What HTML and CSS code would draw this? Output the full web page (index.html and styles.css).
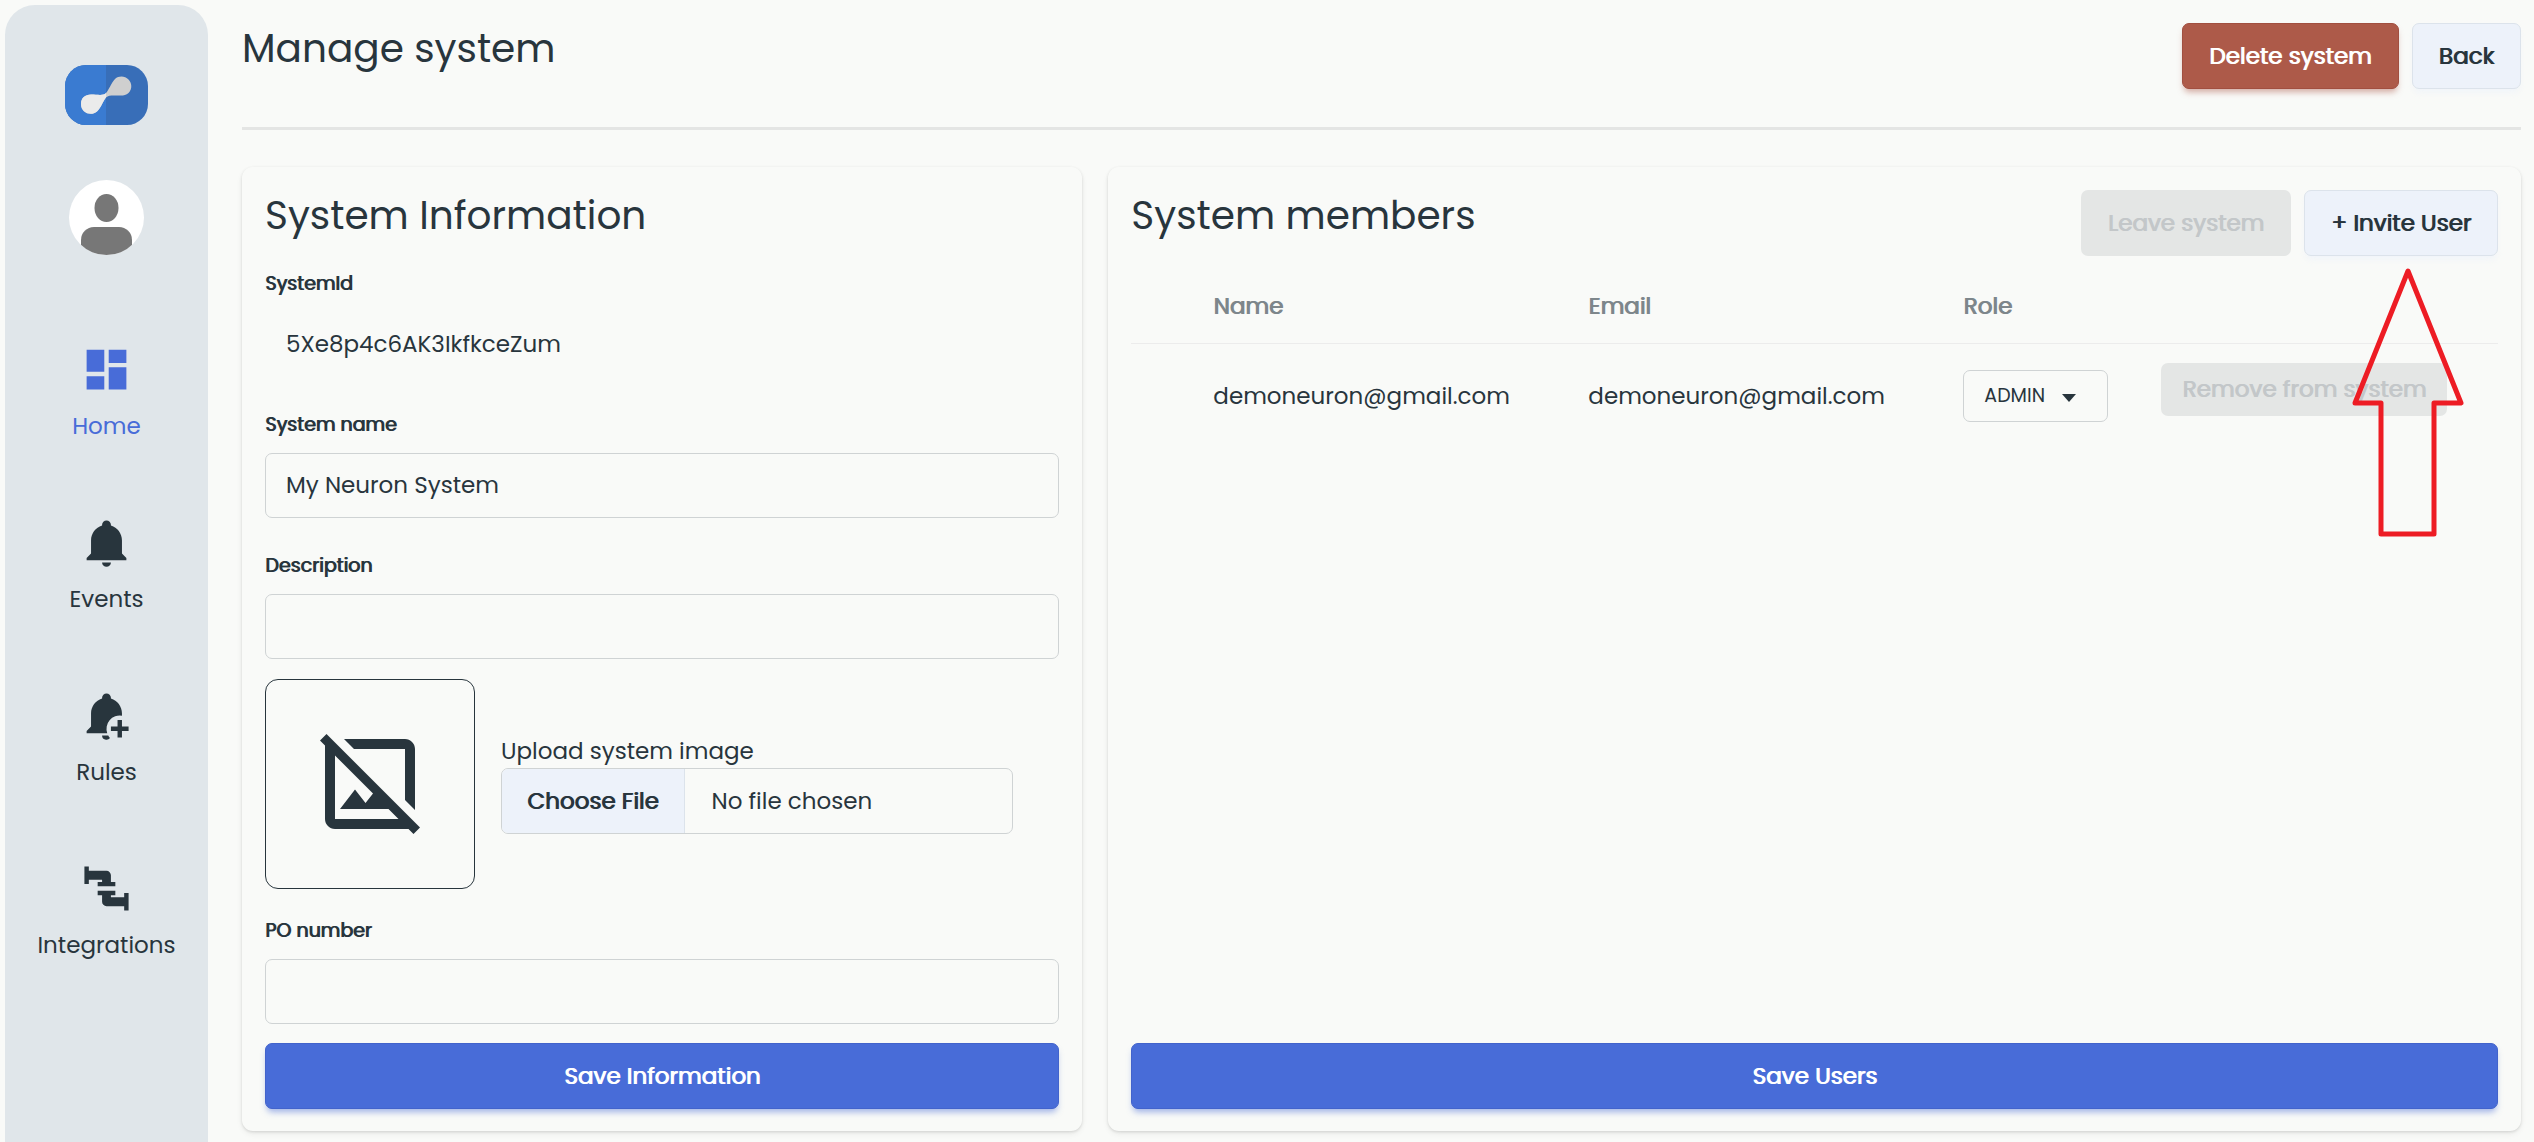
FILE: index.html
```html
<!DOCTYPE html>
<html lang="en">

<head>
  <meta charset="UTF-8">
  <meta name="viewport" content="width=device-width, initial-scale=1.0">
  <title>Manage system</title>

  <link rel="stylesheet" href="styles.css">
</head>

<body>
  <!-- Side navigation -->
  <aside class="sidebar">
    <a href="#" class="logo" aria-label="Neuron">
      <svg width="83" height="60" viewBox="0 0 83 60">
        <clipPath id="logo-shape"><rect width="83" height="60" rx="21" /></clipPath>
        <clipPath id="logo-left"><rect width="41" height="60" /></clipPath>
        <g clip-path="url(#logo-shape)">
          <rect width="83" height="60" fill="#386eb8" />
          <rect width="41" height="60" fill="#3a7bd1" />
        </g>
        <path fill="#cfcfcf" d="M16 39C16 33 20 29.500 26 29.500C33 29.500 38 31 41 28C44 25 46 18 50 14C54 10.500 60 11 63.500 14.500C67 18 67.500 24 63.500 28C60.500 31 57 30.500 53 30.500C48 30.500 43.500 30 41 32.500C38 36 36 43 32 46.500C26 51.500 16 48 16 39Z" />
        <path fill="#ebebeb" clip-path="url(#logo-left)" d="M16 39C16 33 20 29.500 26 29.500C33 29.500 38 31 41 28V32.500C38 36 36 43 32 46.500C26 51.500 16 48 16 39Z" />
      </svg>
    </a>
    <a href="#" class="avatar" aria-label="Account">
      <svg width="75" height="75" viewBox="0 0 75 75">
        <clipPath id="avatar-clip"><circle cx="37.500" cy="37.500" r="37.500" /></clipPath>
        <g clip-path="url(#avatar-clip)">
          <rect width="75" height="75" fill="#fff" />
          <ellipse cx="37.500" cy="28" rx="12" ry="14" fill="#777" />
          <rect x="12" y="47" width="51" height="40" rx="13" fill="#777" />
        </g>
      </svg>
    </a>
    <nav class="nav">
      <a href="#" class="nav-item active">
        <svg class="nav-icon" viewBox="0 0 24 24">
          <path d="M13,3V9H21V3M13,21H21V11H13M3,21H11V15H3M3,13H11V3H3V13Z" />
        </svg>
        Home
      </a>
      <a href="#" class="nav-item">
        <svg class="nav-icon" viewBox="0 0 24 24">
          <path d="M21,19V20H3V19L5,17V11C5,7.9 7.03,5.17 10,4.29C10,4.19 10,4.1 10,4A2,2 0 0,1 12,2A2,2 0 0,1 14,4C14,4.1 14,4.19 14,4.29C16.97,5.17 19,7.9 19,11V17L21,19M14,21A2,2 0 0,1 12,23A2,2 0 0,1 10,21" />
        </svg>
        Events
      </a>
      <a href="#" class="nav-item">
        <svg class="nav-icon" viewBox="0 0 24 24">
          <path d="M12.34,20H3V19L5,17V11C5,7.9 7.03,5.17 10,4.29V4A2,2 0 0,1 14,4V4.29C16.97,5.17 19,7.9 19,11V12.08A6,6 0 0,0 12.34,20M10,21H12.8C13,21.5 13.3,21.9 13.6,22.2A2,2 0 0,1 10,21M17,14H19V17H22V19H19V22H17V19H14V17H17V14Z" />
        </svg>
        Rules
      </a>
      <a href="#" class="nav-item">
        <svg class="nav-icon" viewBox="0 0 24 24">
          <path d="M16,9V11H8V9H10V8H4V10H2V2H4V4H12A2,2 0 0,1 14,6V9H16M10,15V18A2,2 0 0,0 12,20H20V22H22V14H20V16H14V15H16V13H8V15H10Z" />
        </svg>
        Integrations
      </a>
    </nav>
  </aside>

  <main class="content">
    <header class="page-header">
      <h1 class="title">Manage system</h1>
      <div class="actions">
        <button type="button" class="btn btn-danger">Delete system</button>
        <button type="button" class="btn btn-light">Back</button>
      </div>
    </header>

    <div class="columns">
      <!-- System information form -->
      <form class="card">
        <h2 class="title">System Information</h2>
        <div class="field first">
          <label for="system-id">SystemId</label>
          <input class="input plain" type="text" id="system-id" value="5Xe8p4c6AK3IkfkceZum" readonly>
        </div>
        <div class="field">
          <label for="system-name">System name</label>
          <input class="input" type="text" id="system-name" value="My Neuron System">
        </div>
        <div class="field">
          <label for="description">Description</label>
          <input class="input" type="text" id="description">
        </div>
        <div class="upload">
          <div class="preview">
            <svg width="120" height="120" viewBox="0 0 24 24">
              <path d="M22 20.7L3.3 2L2 3.3L3 4.3V19C3 20.1 3.9 21 5 21H19.7L20.7 22L22 20.7M5 19V6.3L12.6 13.9L11.1 15.8L9 13.1L6 17H15.7L17.7 19H5M8.8 5L6.8 3H19C20.1 3 21 3.9 21 5V17.2L19 15.2V5H8.8" />
            </svg>
          </div>
          <div class="upload-field">
            <label for="system-image">Upload system image</label>
            <input class="file-input" type="file" id="system-image">
          </div>
        </div>
        <div class="field">
          <label for="po-number">PO number</label>
          <input class="input" type="text" id="po-number">
        </div>
        <button type="submit" class="btn btn-primary">Save Information</button>
      </form>

      <!-- Members of the system -->
      <section class="card">
        <div class="card-header">
          <h2 class="title">System members</h2>
          <div class="actions">
            <button type="button" class="btn" disabled>Leave system</button>
            <button type="button" class="btn btn-light">+ Invite User</button>
          </div>
        </div>
        <table class="members">
          <colgroup>
            <col class="col-index">
            <col class="col-text">
            <col class="col-text">
            <col class="col-role">
            <col>
          </colgroup>
          <tr>
            <th></th>
            <th>Name</th>
            <th>Email</th>
            <th>Role</th>
            <th></th>
          </tr>
          <tr>
            <td></td>
            <td>demoneuron@gmail.com</td>
            <td>demoneuron@gmail.com</td>
            <td>
              <div class="select">
                <select aria-label="Role">
                  <option>ADMIN</option>
                  <option>USER</option>
                </select>
              </div>
            </td>
            <td><button type="button" class="btn btn-small" disabled>Remove from system</button></td>
          </tr>
        </table>
        <button type="button" class="btn btn-primary">Save Users</button>

        <!-- Points at the invite button -->
        <svg class="arrow" width="112" height="270" viewBox="0 0 112 270">
          <path d="M56 3L109 135H82V266H29V135H3Z" />
        </svg>
      </section>
    </div>
  </main>
</body>

</html>
```
FILE: styles.css
```css
* {
  box-sizing: border-box;
}

body {
  display: flex;
  min-height: 100vh;
  margin: 0;
  background-color: #f9faf8;
  color: #28353d;
  font-family: Poppins, Inter, "Open Sans", sans-serif;
  font-size: 23px;
  line-height: 30px;
}

input,
select,
button {
  font: inherit;
  color: inherit;
}

/* Side navigation */
.sidebar {
  flex: none;
  display: flex;
  flex-direction: column;
  align-items: center;
  width: 203px;
  margin: 5px 34px 0 5px;
  padding-top: 60px;
  border-radius: 30px 30px 0 0;
  background-color: #e0e6ea;
}

.logo,
.avatar {
  display: block;
  height: 60px;
}

.avatar {
  height: 75px;
  margin-top: 55px;
}

.nav {
  display: flex;
  flex-direction: column;
  gap: 75px;
  margin-top: 88px;
}

.nav-item {
  display: flex;
  flex-direction: column;
  align-items: center;
  gap: 15px;
  color: inherit;
  text-decoration: none;
}

.nav-item.active {
  color: #486cd8;
}

.nav-icon {
  width: 53px;
  height: 53px;
  fill: currentColor;
}

/* Page layout */
.content {
  flex: 1;
  display: flex;
  flex-direction: column;
  padding: 23px 13px 11px 0;
}

.page-header {
  display: flex;
  justify-content: space-between;
  padding-bottom: 38px;
  border-bottom: 3px solid #e4e5e4;
}

.title {
  margin: 0;
  font-size: 39px;
  font-weight: 400;
  line-height: 52px;
}

.actions {
  display: flex;
  gap: 13px;
}

.columns {
  flex: 1;
  display: grid;
  grid-template-columns: 373fr 627fr;
  gap: 26px;
  margin-top: 37px;
}

.card {
  position: relative;
  display: flex;
  flex-direction: column;
  padding: 23px 23px 22px;
  border-radius: 11px;
  box-shadow: 0 1px 3px rgba(0, 0, 0, 0.12), 0 3px 6px rgba(0, 0, 0, 0.06);
}

.card-header {
  display: flex;
  justify-content: space-between;
}

/* Buttons */
.btn {
  height: 66px;
  padding: 0 26px;
  border: 1px solid transparent;
  border-radius: 7px;
  text-shadow: 1px 0 currentColor;
  cursor: pointer;
}

.btn-primary {
  margin-top: auto;
  border-color: #4263cb;
  background-color: #486cd8;
  color: #fff;
  box-shadow: 0 5px 6px -2px rgba(72, 108, 216, 0.5);
}

.btn-danger {
  border-color: #a14f40;
  background-color: #ad5a49;
  color: #fff;
  box-shadow: 0 5px 6px -2px rgba(173, 90, 73, 0.5);
}

.btn-light {
  border-color: #dce3eb;
  background-color: #edf2fa;
  box-shadow: 0 5px 6px -2px rgba(237, 242, 250, 0.8);
}

.btn:disabled {
  background-color: #e4e6e5;
  color: #c3c7c9;
  cursor: default;
}

.btn-small {
  height: 53px;
  margin-bottom: 13px;
  padding: 0 20px;
}

/* Form */
.field {
  display: flex;
  flex-direction: column;
  gap: 14px;
  margin-top: 34px;
}

.field.first,
.upload + .field {
  margin-top: 28px;
}

.field label {
  font-size: 19px;
  line-height: 28px;
  text-shadow: 1px 0 currentColor;
}

.input {
  width: 100%;
  height: 65px;
  padding: 0 20px 2px;
  border: 1px solid #cfd3d4;
  border-radius: 7px;
  background-color: transparent;
}

.input.plain {
  border-color: transparent;
}

.upload {
  display: flex;
  align-items: center;
  gap: 26px;
  margin-top: 20px;
}

.preview {
  display: flex;
  align-items: center;
  justify-content: center;
  width: 210px;
  height: 210px;
  border: 1px solid #28353d;
  border-radius: 13px;
  fill: #28353d;
}

.upload-field {
  display: flex;
  flex-direction: column;
}

.upload-field label {
  line-height: 34px;
}

.file-input {
  width: 512px;
  height: 66px;
  border: 1px solid #cfd3d4;
  border-radius: 7px;
  line-height: 64px;
  overflow: hidden;
}

.file-input::file-selector-button {
  height: 64px;
  margin: 0 27px 0 0;
  padding: 0 25px;
  border: 0;
  border-right: 1px solid #dce3eb;
  background-color: #edf2fa;
  color: inherit;
  font: inherit;
  text-shadow: 1px 0 currentColor;
}

/* Members table */
.members {
  width: 100%;
  margin-top: 13px;
  border-collapse: collapse;
  table-layout: fixed;
  text-align: left;
}

.members th {
  padding: 22px;
  border-bottom: 1px solid #ececec;
  color: #7d868b;
  font-weight: 400;
  text-shadow: 1px 0 currentColor;
}

.members td {
  height: 104px;
  padding: 0 22px;
}

.col-index {
  width: 60px;
}

.col-text {
  width: 375px;
}

.col-role {
  width: 198px;
}

.members .btn {
  white-space: nowrap;
}

.select {
  position: relative;
  width: 145px;
}

.select select {
  display: block;
  width: 100%;
  height: 52px;
  padding: 0 20px;
  border: 1px solid #cfd3d4;
  border-radius: 7px;
  background-color: transparent;
  font-size: 19px;
  appearance: none;
}

.select::after {
  content: "";
  position: absolute;
  top: 24px;
  right: 32px;
  border: 7px solid transparent;
  border-top: 8px solid #28353d;
  border-bottom: 0;
  pointer-events: none;
}

.arrow {
  position: absolute;
  top: 101px;
  right: 57px;
  fill: none;
  stroke: #ed1c24;
  stroke-width: 5px;
  stroke-linejoin: round;
  pointer-events: none;
}
```
